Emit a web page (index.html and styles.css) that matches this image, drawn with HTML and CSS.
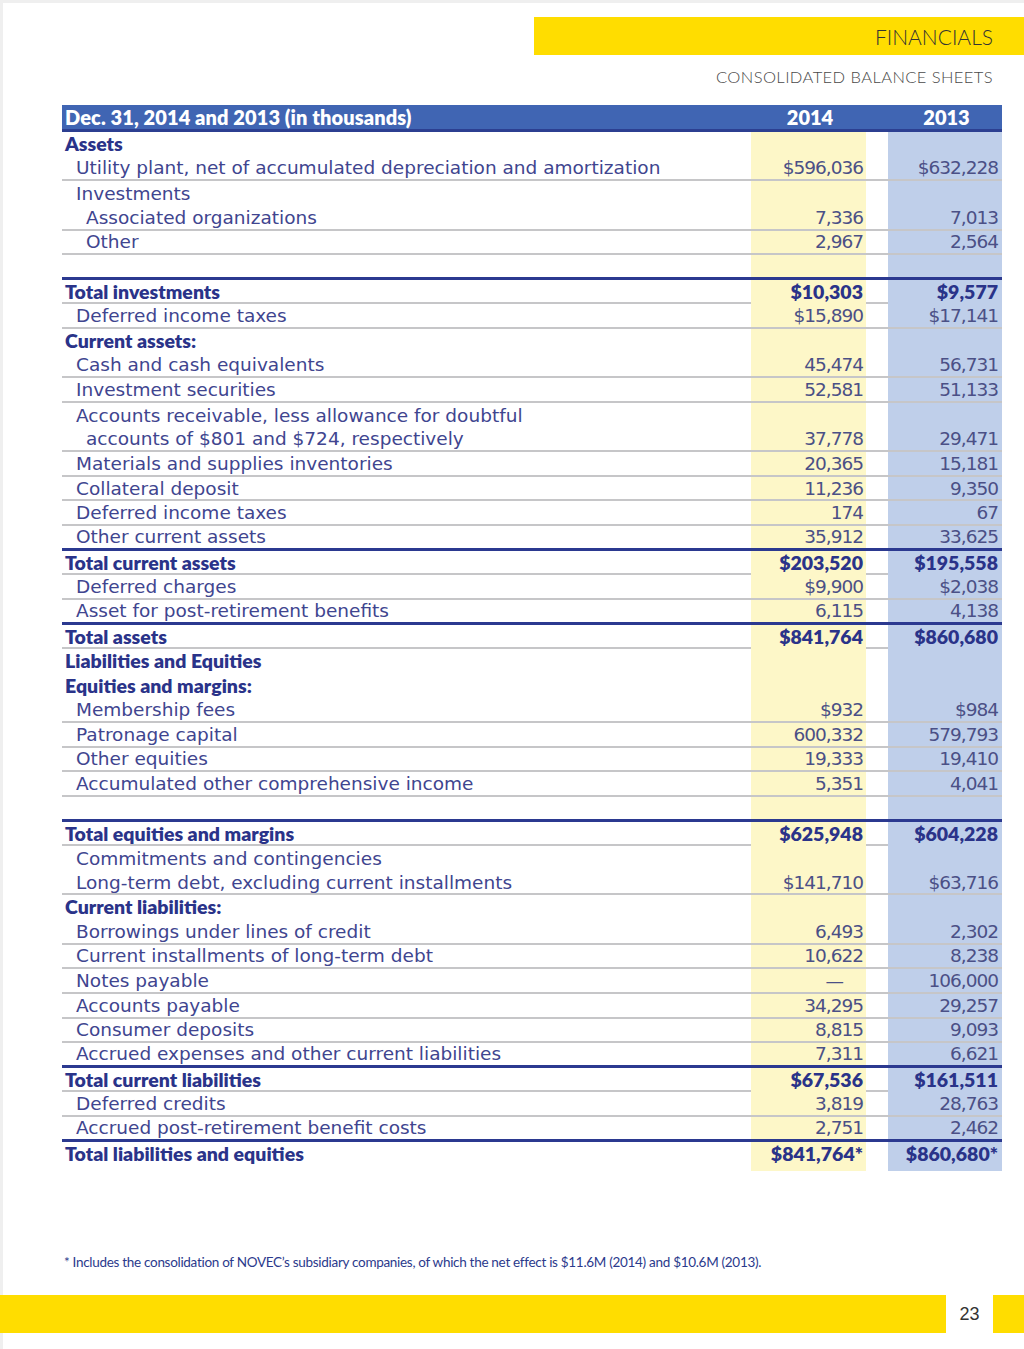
FILE: index.html
```html
<!DOCTYPE html>
<html lang="en">
<head>
<meta charset="utf-8">
<title>Financials – Consolidated Balance Sheets</title>
<link rel="stylesheet" href="styles.css">
</head>
<body>
<div class="page">
  <header class="top">
    <div class="band">FINANCIALS</div>
    <div class="subtitle">CONSOLIDATED BALANCE SHEETS</div>
  </header>

  <section class="sheet">
    <div class="row head"><div class="lab">Dec. 31, 2014 and 2013 (in thousands)</div><div class="v c14">2014</div><div class="gap"></div><div class="v c13">2013</div></div>

    <div class="row tot"><div class="lab">Assets</div><div class="v y"></div><div class="gap"></div><div class="v b"></div></div>
    <div class="row ln"><div class="lab">Utility plant, net of accumulated depreciation and amortization</div><div class="v y">$596,036</div><div class="gap"></div><div class="v b">$632,228</div></div>
    <div class="row"><div class="lab">Investments</div><div class="v y"></div><div class="gap"></div><div class="v b"></div></div>
    <div class="row ln"><div class="lab l2">Associated organizations</div><div class="v y">7,336</div><div class="gap"></div><div class="v b">7,013</div></div>
    <div class="row ln"><div class="lab l2">Other</div><div class="v y">2,967</div><div class="gap"></div><div class="v b">2,564</div></div>
    <div class="row tk"><div class="lab"></div><div class="v y"></div><div class="gap"></div><div class="v b"></div></div>
    <div class="row tot ln"><div class="lab">Total investments</div><div class="v y">$10,303</div><div class="gap"></div><div class="v b">$9,577</div></div>
    <div class="row ln"><div class="lab">Deferred income taxes</div><div class="v y">$15,890</div><div class="gap"></div><div class="v b">$17,141</div></div>
    <div class="row tot"><div class="lab">Current assets:</div><div class="v y"></div><div class="gap"></div><div class="v b"></div></div>
    <div class="row ln"><div class="lab">Cash and cash equivalents</div><div class="v y">45,474</div><div class="gap"></div><div class="v b">56,731</div></div>
    <div class="row ln"><div class="lab">Investment securities</div><div class="v y">52,581</div><div class="gap"></div><div class="v b">51,133</div></div>
    <div class="row"><div class="lab">Accounts receivable, less allowance for doubtful</div><div class="v y"></div><div class="gap"></div><div class="v b"></div></div>
    <div class="row ln"><div class="lab l2">accounts of $801 and $724, respectively</div><div class="v y">37,778</div><div class="gap"></div><div class="v b">29,471</div></div>
    <div class="row ln"><div class="lab">Materials and supplies inventories</div><div class="v y">20,365</div><div class="gap"></div><div class="v b">15,181</div></div>
    <div class="row ln"><div class="lab">Collateral deposit</div><div class="v y">11,236</div><div class="gap"></div><div class="v b">9,350</div></div>
    <div class="row ln"><div class="lab">Deferred income taxes</div><div class="v y">174</div><div class="gap"></div><div class="v b">67</div></div>
    <div class="row tk"><div class="lab">Other current assets</div><div class="v y">35,912</div><div class="gap"></div><div class="v b">33,625</div></div>
    <div class="row tot ln"><div class="lab">Total current assets</div><div class="v y">$203,520</div><div class="gap"></div><div class="v b">$195,558</div></div>
    <div class="row ln"><div class="lab">Deferred charges</div><div class="v y">$9,900</div><div class="gap"></div><div class="v b">$2,038</div></div>
    <div class="row tk"><div class="lab">Asset for post-retirement benefits</div><div class="v y">6,115</div><div class="gap"></div><div class="v b">4,138</div></div>
    <div class="row tot ln"><div class="lab">Total assets</div><div class="v y">$841,764</div><div class="gap"></div><div class="v b">$860,680</div></div>
    <div class="row tot"><div class="lab">Liabilities and Equities</div><div class="v y"></div><div class="gap"></div><div class="v b"></div></div>
    <div class="row tot"><div class="lab">Equities and margins:</div><div class="v y"></div><div class="gap"></div><div class="v b"></div></div>
    <div class="row ln"><div class="lab">Membership fees</div><div class="v y">$932</div><div class="gap"></div><div class="v b">$984</div></div>
    <div class="row ln"><div class="lab">Patronage capital</div><div class="v y">600,332</div><div class="gap"></div><div class="v b">579,793</div></div>
    <div class="row ln"><div class="lab">Other equities</div><div class="v y">19,333</div><div class="gap"></div><div class="v b">19,410</div></div>
    <div class="row ln"><div class="lab">Accumulated other comprehensive income</div><div class="v y">5,351</div><div class="gap"></div><div class="v b">4,041</div></div>
    <div class="row tk"><div class="lab"></div><div class="v y"></div><div class="gap"></div><div class="v b"></div></div>
    <div class="row tot ln"><div class="lab">Total equities and margins</div><div class="v y">$625,948</div><div class="gap"></div><div class="v b">$604,228</div></div>
    <div class="row"><div class="lab">Commitments and contingencies</div><div class="v y"></div><div class="gap"></div><div class="v b"></div></div>
    <div class="row ln"><div class="lab">Long-term debt, excluding current installments</div><div class="v y">$141,710</div><div class="gap"></div><div class="v b">$63,716</div></div>
    <div class="row tot"><div class="lab">Current liabilities:</div><div class="v y"></div><div class="gap"></div><div class="v b"></div></div>
    <div class="row ln"><div class="lab">Borrowings under lines of credit</div><div class="v y">6,493</div><div class="gap"></div><div class="v b">2,302</div></div>
    <div class="row ln"><div class="lab">Current installments of long-term debt</div><div class="v y">10,622</div><div class="gap"></div><div class="v b">8,238</div></div>
    <div class="row ln"><div class="lab">Notes payable</div><div class="v y dash">—</div><div class="gap"></div><div class="v b">106,000</div></div>
    <div class="row ln"><div class="lab">Accounts payable</div><div class="v y">34,295</div><div class="gap"></div><div class="v b">29,257</div></div>
    <div class="row ln"><div class="lab">Consumer deposits</div><div class="v y">8,815</div><div class="gap"></div><div class="v b">9,093</div></div>
    <div class="row tk"><div class="lab">Accrued expenses and other current liabilities</div><div class="v y">7,311</div><div class="gap"></div><div class="v b">6,621</div></div>
    <div class="row tot ln"><div class="lab">Total current liabilities</div><div class="v y">$67,536</div><div class="gap"></div><div class="v b">$161,511</div></div>
    <div class="row ln"><div class="lab">Deferred credits</div><div class="v y">3,819</div><div class="gap"></div><div class="v b">28,763</div></div>
    <div class="row tk"><div class="lab">Accrued post-retirement benefit costs</div><div class="v y">2,751</div><div class="gap"></div><div class="v b">2,462</div></div>
    <div class="row tot"><div class="lab">Total liabilities and equities</div><div class="v y">$841,764*</div><div class="gap"></div><div class="v b">$860,680*</div></div>
  </section>

  <p class="note">* Includes the consolidation of NOVEC’s subsidiary companies, of which the net effect is $11.6M (2014) and $10.6M (2013).</p>

  <footer class="bottom">
    <div class="bar"></div>
    <div class="pg">23</div>
    <div class="bar end"></div>
  </footer>
</div>
</body>
</html>
```

FILE: styles.css
```css
* { box-sizing: border-box; }

html, body {
  margin: 0;
  background: #ffffff;
}

.page {
  width: 1024px;
  height: 1349px;
  display: flex;
  flex-direction: column;
  overflow: hidden;
  box-shadow: inset 3px 3px 0 #efefef;
}

/* ---------- top heading ---------- */
.band {
  margin: 17px 0 0 534px;
  height: 38px;
  background: #ffdd00;
  display: flex;
  align-items: center;
  justify-content: flex-end;
  padding-right: 31px;
  font: 300 21px "Lato", sans-serif;
  color: #333333;
}

.subtitle {
  margin-top: 13px;
  padding-right: 31px;
  text-align: right;
  font: 300 16.5px/18px "Lato", sans-serif;
  color: #4a4a4a;
  letter-spacing: 0.42px;
}

/* ---------- table ---------- */
.sheet {
  margin: 19px 0 0 62px;
  width: 940px;
}

.row {
  display: grid;
  grid-template-columns: 689px 115px 22px 114px;
  height: 24.64px;
}

.row.ln { border-bottom: 2px solid #c6c6c8; }
.row.tk { border-bottom: 3px solid #2b3990; }

.lab {
  display: flex;
  align-items: center;
  padding-left: 14px;
  white-space: nowrap;
  font: 18.5px "DejaVu Sans", sans-serif;
  color: #40458f;
}

.lab.l2 { padding-left: 24px; }

.v {
  display: flex;
  align-items: center;
  justify-content: flex-end;
  white-space: nowrap;
  font: 18.5px "DejaVu Sans", sans-serif;
  letter-spacing: -1px;
  color: #4b5086;
}

.v.y { background: #fdf7c8; padding-right: 3px; }
.v.b { background: #bfcfea; padding-right: 4px; }
.v.dash { padding-right: 22px; letter-spacing: 0; }

.tot .lab {
  padding: 0 0 6px 3px;
  font: 800 19.5px "Lato", sans-serif;
  color: #2a3389;
}

.tot .v {
  padding-bottom: 5px;
  font: 800 19.5px "Lato", sans-serif;
  letter-spacing: 0;
  color: #2a3389;
}

/* header row */
.row.head {
  height: 27px;
  background: #4065b3;
  border-bottom: 3px solid #2c3f91;
}

.head .lab {
  padding: 0 0 2px 3px;
  font: 800 20px "Lato", sans-serif;
  letter-spacing: 0.1px;
  color: #ffffff;
}

.head .v {
  justify-content: center;
  padding: 0 0 2px 3px;
  font: 800 20px "Lato", sans-serif;
  letter-spacing: 0;
  color: #ffffff;
}

/* ---------- footnote ---------- */
.note {
  margin: 88px 0 0 0;
  padding-left: 64px;
  font: 13.5px/16px "Lato", sans-serif;
  letter-spacing: -0.3px;
  color: #2b3a8c;
}

/* ---------- bottom bar ---------- */
.bottom {
  margin-top: auto;
  margin-bottom: 16px;
  height: 38px;
  display: flex;
}

.bar {
  width: 946px;
  background: #ffdd00;
}

.bar.end { flex: 1; width: auto; }

.pg {
  width: 47px;
  display: flex;
  align-items: center;
  justify-content: center;
  font: 18px "Liberation Sans", sans-serif;
  color: #333333;
}
```
